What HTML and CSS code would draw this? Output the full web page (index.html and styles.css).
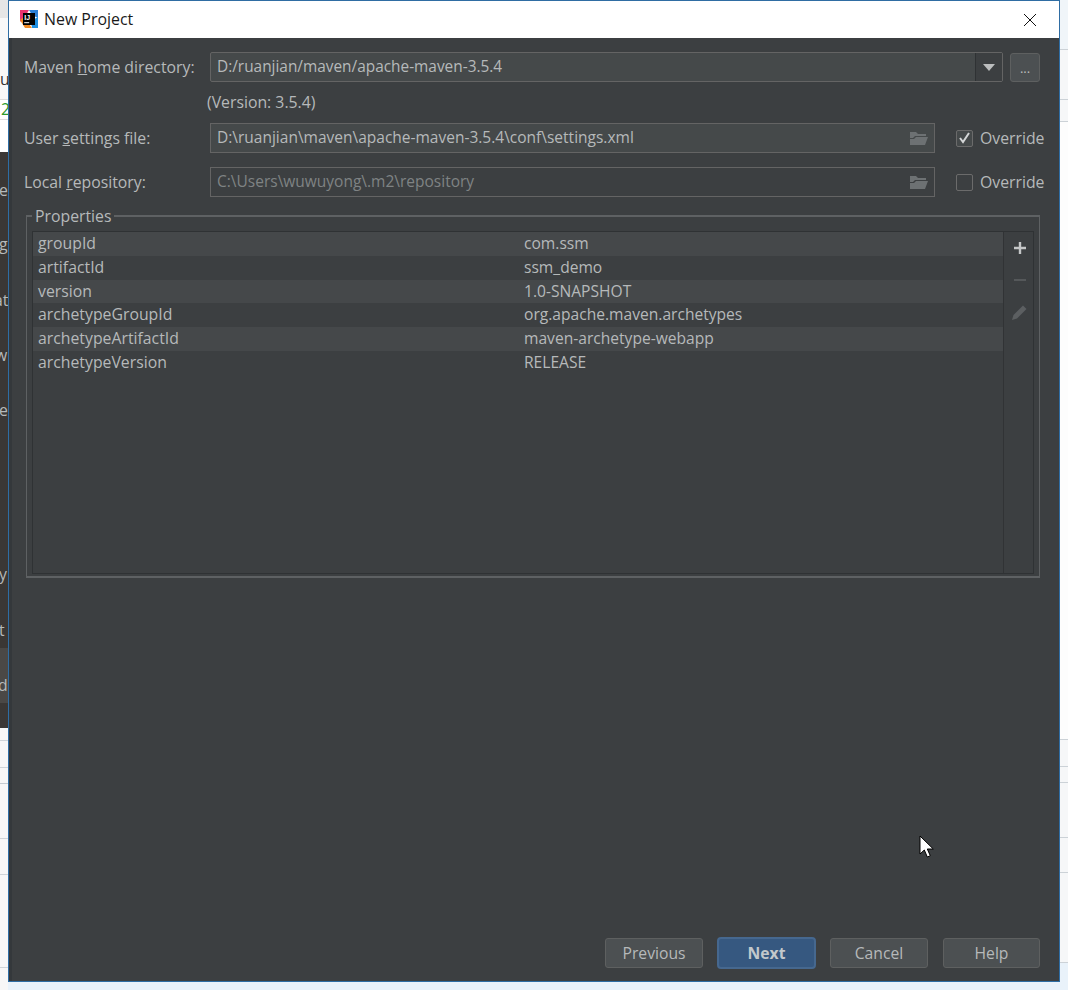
FILE: index.html
```html
<!DOCTYPE html>
<html lang="en">
<head>
<meta charset="utf-8">
<title>New Project</title>
<link rel="stylesheet" href="styles.css">
</head>
<body>
<div class="backdrop-left">
  <div class="bl a"></div>
  <div class="bl b"><span class="t1">u</span></div>
  <div class="bl c"><span class="t2">2</span></div>
  <div class="bl d"></div>
  <div class="bl e">
    <span class="g g1">e</span><span class="g g2">g</span><span class="g g3">at</span><span class="g g4">w</span><span class="g g5">e</span><span class="g g6">y</span><span class="g g7">t</span>
  </div>
  <div class="bl f"><span class="g8">d</span></div>
  <div class="bl h"></div>
  <div class="bl i"></div>
</div>
<div class="backdrop-right">
  <div class="r r1"></div><div class="r r2"></div><div class="r r3"></div><div class="r r4"></div><div class="r r5"></div><div class="r r6"></div><div class="r r7"></div><div class="r r8"></div><div class="r r9"></div>
</div>
<main class="dialog">
  <header class="titlebar">
    <svg class="logo" width="20" height="20" viewBox="0 0 20 20">
      <path d="M1 1h9L7 6l-6 7z" fill="#e8336e"/>
      <path d="M10 1h9v8l-6-3z" fill="#2b7fd6"/>
      <path d="M1 11l5 8h7L5 8z" fill="#f08a24"/>
      <path d="M13 19h6V8l-7 4z" fill="#1f8fe0"/>
      <rect x="4" y="4" width="12" height="12" fill="#000"/>
      <text x="5.2" y="11" class="logo-text">IJ</text>
      <rect x="5.2" y="13.2" width="5" height="1" fill="#fff"/>
    </svg>
    <span class="title">New Project</span>
    <svg class="close" width="14" height="14" viewBox="0 0 14 14"><path d="M1 1l12 12M13 1L1 13" stroke="#111" stroke-width="1" fill="none"/></svg>
  </header>
  <div class="content">
    <div class="row home">
      <label class="lbl">Maven <u>h</u>ome directory:</label>
      <div class="combo">
        <span class="combo-text">D:/ruanjian/maven/apache-maven-3.5.4</span>
        <span class="combo-arrow"><svg width="12" height="7" viewBox="0 0 12 7"><path d="M0 0h12L6 7z" fill="#bbbdbe"/></svg></span>
      </div>
      <button class="dots">...</button>
    </div>
    <div class="version">(Version: 3.5.4)</div>
    <div class="row settings">
      <label class="lbl">User <u>s</u>ettings file:</label>
      <div class="field">
        <span>D:\ruanjian\maven\apache-maven-3.5.4\conf\settings.xml</span>
        <svg class="folder" width="20" height="16" viewBox="0 0 20 16"><path d="M1 2h6l2 2h8v2H6L4 8H1zM1 15V9h4l2-2h12l-3 8z" fill="#6d7173"/></svg>
      </div>
      <span class="check on"><svg width="13" height="12" viewBox="0 0 13 12"><path d="M2 6l3 4 6-9" stroke="#d4d6d7" stroke-width="2" fill="none"/></svg></span>
      <span class="ovr">Override</span>
    </div>
    <div class="row repo">
      <label class="lbl">Local <u>r</u>epository:</label>
      <div class="field disabled">
        <span>C:\Users\wuwuyong\.m2\repository</span>
        <svg class="folder" width="20" height="16" viewBox="0 0 20 16"><path d="M1 2h6l2 2h8v2H6L4 8H1zM1 15V9h4l2-2h12l-3 8z" fill="#6d7173"/></svg>
      </div>
      <span class="check"></span>
      <span class="ovr">Override</span>
    </div>
    <fieldset class="props">
      <legend>Properties</legend>
      <div class="table-wrap">
        <div class="table">
          <div class="tr odd"><span class="key">groupId</span><span>com.ssm</span></div>
          <div class="tr"><span class="key">artifactId</span><span>ssm_demo</span></div>
          <div class="tr odd"><span class="key">version</span><span>1.0-SNAPSHOT</span></div>
          <div class="tr"><span class="key">archetypeGroupId</span><span>org.apache.maven.archetypes</span></div>
          <div class="tr odd"><span class="key">archetypeArtifactId</span><span>maven-archetype-webapp</span></div>
          <div class="tr"><span class="key">archetypeVersion</span><span>RELEASE</span></div>
        </div>
        <div class="tools">
          <svg width="14" height="14" viewBox="0 0 14 14"><path d="M7 1v12M1 7h12" stroke="#c4c6c7" stroke-width="2.4"/></svg>
          <svg width="14" height="14" viewBox="0 0 14 14"><path d="M1 7h12" stroke="#55585a" stroke-width="2"/></svg>
          <svg width="18" height="18" viewBox="0 0 18 18"><path d="M1 17l1.500-5L12 2.500 15.500 6 6 15.500z" fill="#5c5f61"/></svg>
        </div>
      </div>
    </fieldset>
    <div class="spacer"></div>
    <div class="buttons">
      <button class="btn">Previous</button>
      <button class="btn primary">Next</button>
      <button class="btn">Cancel</button>
      <button class="btn last">Help</button>
    </div>
  </div>
  <svg class="cursor" width="16" height="24" viewBox="0 0 16 24"><path d="M1 1v18l4.300-4 3 7 3-1.300-3-6.700h6z" fill="#fff" stroke="#000" stroke-width="1"/></svg>
</main>
</body>
</html>
```
FILE: styles.css
```css
* { box-sizing: border-box; }
html, body { margin: 0; height: 990px; overflow: hidden; }
body {
  position: relative;
  width: 1068px;
  background: #e9f2fa;
  font-family: "Open Sans", "Noto Sans", sans-serif;
  font-size: 15.800px;
  color: #b6b9ba;
}
.backdrop-left {
  position: absolute; left: 0; top: 0; width: 8px; height: 990px;
  display: flex; flex-direction: column;
  overflow: hidden;
}
.bl { position: relative; flex: none; overflow: hidden; }
.bl.a { height: 18px; background: #e6e6e6; }
.bl.b { height: 81px; background: #f8f8f8; }
.bl.c { height: 21px; background: #fff; border-top: 1px solid #ddd; border-bottom: 1px solid #ddd; }
.bl.d { height: 32px; background: #fff; }
.bl.e { height: 496px; background: #3a3735; }
.bl.f { height: 55px; background: #4a4846; }
.bl.h { height: 25px; background: #3a3735; }
.bl.i {
  height: 262px;
  background:
    linear-gradient(#cfd4d8, #cfd4d8) 0 12px / 100% 1px no-repeat,
    linear-gradient(#cfd4d8, #cfd4d8) 0 39px / 100% 1px no-repeat,
    linear-gradient(#c4cbd1, #c4cbd1) 0 55px / 100% 1px no-repeat,
    linear-gradient(#cfd4d8, #cfd4d8) 0 110px / 100% 1px no-repeat,
    linear-gradient(#cfd4d8, #cfd4d8) 0 146px / 100% 1px no-repeat,
    linear-gradient(#cfd4d8, #cfd4d8) 0 239px / 100% 1px no-repeat,
    #f7f7f7;
}
.t1 { position: absolute; left: 0; top: 50px; color: #333; }
.t2 { position: absolute; left: 1px; top: -2px; color: #2a9a2a; }
.g, .g8 { position: absolute; left: -1px; color: #b6b9ba; }
.g1 { top: 27px; } .g2 { top: 81px; } .g3 { top: 137px; left: -6px; } .g4 { top: 192px; left: -5px; }
.g5 { top: 247px; } .g6 { top: 411px; } .g7 { top: 467px; }
.g8 { top: 26px; left: -2px; }
.backdrop-right {
  position: absolute; left: 1060px; top: 0; width: 8px; height: 990px;
  display: flex; flex-direction: column;
}
.r { flex: none; border-bottom: 1px solid #ccd2d7; background: #f6f7f8; }
.r1 { height: 50px; background: #f0f5f9; }
.r2 { height: 50px; } .r3 { height: 22px; } .r4 { height: 618px; background: #fdfdfd; }
.r5 { height: 27px; } .r6 { height: 16px; } .r7 { height: 55px; } .r8 { height: 35px; } .r9 { height: 90px; }
.dialog {
  position: absolute; left: 8px; top: 0; width: 1052px; height: 982px;
  background: #3c3f41;
  border: 1px solid #2f6da3;
  display: flex; flex-direction: column;
}
.titlebar {
  flex: none; height: 37px; background: #fff;
  display: flex; align-items: center;
  padding: 0 22px 2px 10px;
  color: #1a1a1a;
}
.logo { flex: none; }
.logo-text { font: 700 7px "Liberation Sans", sans-serif; fill: #fff; }
.title { margin-left: 5px; font-size: 15.900px; }
.close { margin-left: auto; margin-top: 2px; }
.content {
  flex: 1; min-height: 0;
  display: flex; flex-direction: column;
  padding: 14px 19px 12px 15px;
  box-shadow: inset 3px 0 0 #34383b;
}
.row { display: flex; align-items: center; height: 30px; flex: none; }
.lbl { width: 186px; flex: none; }
.combo {
  width: 793px; height: 30px; flex: none;
  display: flex; align-items: stretch;
  background: #45494a; border: 1px solid #646464; border-radius: 2px;
  font-size: 15.400px;
}
.combo-text { flex: 1; padding: 0 6px; line-height: 27px; border-right: 1px solid #2f3234; }
.combo-arrow { width: 26px; flex: none; background: #3c3f41; display: flex; align-items: center; justify-content: center; }
.dots {
  margin-left: 7px; width: 30px; height: 29px; flex: none;
  background: #4c5052; border: 1px solid #5e6060; border-radius: 3px;
  color: #bbb; font: 13px "Open Sans", sans-serif; padding: 2px 0 0;
}
.version { height: 41px; flex: none; padding-left: 183px; padding-top: 10px; line-height: 20px; }
.field {
  width: 725px; height: 30px; flex: none;
  display: flex; align-items: center; justify-content: space-between;
  padding: 0 5px 2px 6px;
  background: #45494a; border: 1px solid #646464;
  font-size: 15.500px;
}
.field.disabled { background: #3c3f41; color: #7f8384; }
.folder { margin-top: 2px; }
.settings { margin-bottom: 14px; }
.check {
  margin-left: 21px; width: 17px; height: 17px; flex: none;
  border: 1px solid #6b6b6b; border-radius: 2px;
  background: #45494a;
  display: flex; align-items: center; justify-content: center;
}
.repo .check { background: #3c3f41; }
.ovr { margin-left: 7px; flex: none; }
.props {
  margin: 11px 0 0 2px; padding: 0 5px 4px 5px;
  height: 370px; width: 1014px; flex: none;
  border: 1px solid #5e6163; border-width: 2px 1px 2px 1px;
  min-inline-size: 0;
}
.props legend { margin-left: 0; padding: 0 3px; line-height: 16px; height: 16px; }
.table-wrap {
  height: 343px; margin-top: 7px;
  display: flex;
  border: 1px solid #2f3234;
  background: #3c3f41;
}
.table { flex: 1; border-right: 1px solid #313335; min-width: 0; }
.tr {
  height: 23.800px; display: grid; grid-template-columns: 486px 1fr;
  padding-left: 5px; line-height: 22px; font-size: 15.600px;
}
.key { font-size: 15.800px; }
.tools { width: 29px; flex: none; display: flex; flex-direction: column; align-items: center; padding: 9px 0 0 2px; gap: 18px; }
.tools svg:last-child { margin-top: -2px; }
.tr.odd { background: #45484a; }
.spacer { flex: 1; }
.buttons { flex: none; display: flex; align-items: center; justify-content: flex-end; height: 32px; }
.btn {
  width: 98px; height: 30px; flex: none;
  background: #4c5052; border: 1px solid #5e6060; border-radius: 3px;
  color: #b6b9ba; font: 15.700px "Open Sans", sans-serif; padding: 0;
  margin-left: 14px;
}
.btn.primary {
  width: 99px; height: 32px;
  background: #365880; border: 2px solid #46688f; border-radius: 4px;
  color: #c3c8cc; font-weight: 700;
}
.btn.last { width: 97px; margin-left: 15px; }
.cursor { position: absolute; left: 910px; top: 834px; }
```
